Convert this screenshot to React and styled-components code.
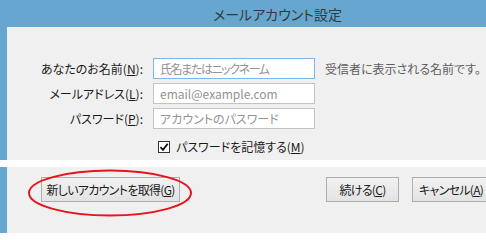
import React from 'react';
import styled, { createGlobalStyle } from 'styled-components';

const GlobalStyle = createGlobalStyle`
  html, body {
    margin: 0;
    padding: 0;
    width: 486px;
    height: 233px;
    overflow: hidden;
    background: #ffffff;
  }
  body {
    font-family: "Noto Sans CJK JP", "Noto Sans", sans-serif;
    font-feature-settings: "palt";
    -webkit-font-smoothing: antialiased;
  }
`;

const Window = styled.div`
  width: 486px;
  height: 233px;
  display: flex;
  flex-direction: column;
  background: #66a6cf;
`;

const TitleBar = styled.div`
  height: 27px;
  display: flex;
  align-items: center;
  padding-left: 213px;
  font-size: 14px;
  color: #2f3b44;
`;

const Frame = styled.div`
  padding-left: 7px;
  height: ${(p) => p.$height}px;
  display: flex;
`;

const Panel = styled.div`
  flex: 1;
  background: #f0f0f0;
  position: relative;
`;

const Divider = styled.div`
  height: 7px;
  background: #ffffff;
`;

const Form = styled.div`
  display: grid;
  grid-template-columns: 136px 162px auto;
  column-gap: 10px;
  row-gap: 4px;
  align-items: center;
  padding-top: 31px;
`;

const Label = styled.label`
  font-size: 12px;
  color: #1a1a1a;
  text-align: right;
  white-space: nowrap;
`;

const Input = styled.div`
  height: 21px;
  box-sizing: border-box;
  background: #ffffff;
  border: 1px solid ${(p) => (p.$focused ? '#7fb6e8' : '#c3c3c3')};
  padding-left: 6px;
  display: flex;
  align-items: center;
  font-size: 12px;
  letter-spacing: ${(p) => (p.$tight ? '-1.4px' : '0')};
  color: #939393;
  white-space: nowrap;
  overflow: hidden;
`;

const Hint = styled.span`
  font-size: 12px;
  color: #5e5e5e;
  white-space: nowrap;
`;

const CheckRow = styled.div`
  display: flex;
  align-items: center;
  gap: 6px;
  margin: 9px 0 0 151px;
  font-size: 12px;
  color: #1a1a1a;
`;

const Box = styled.span`
  width: 12px;
  height: 12px;
  box-sizing: border-box;
  border: 1px solid #333333;
  background: #ffffff;
  display: flex;
  align-items: center;
  justify-content: center;
`;

const ButtonRow = styled.div`
  display: flex;
  align-items: center;
  padding: 10px 0 0 34px;
`;

const Button = styled.div`
  width: ${(p) => p.$width}px;
  margin-left: ${(p) => p.$gap || 0}px;
  flex-shrink: 0;
  height: 25px;
  box-sizing: border-box;
  border: 1px solid #adadad;
  background: linear-gradient(#f2f2f2, #e3e3e3);
  display: flex;
  align-items: center;
  justify-content: center;
  font-size: 12px;
  letter-spacing: -0.7px;
  color: #1a1a1a;
  white-space: nowrap;
`;

const Circle = styled.svg`
  position: absolute;
  left: 20px;
  top: 1px;
  pointer-events: none;
`;

const Check = () => (
  <svg width="10" height="10" viewBox="0 0 10 10">
    <path d="M1.5 5.2 L4 7.8 L8.7 1.8" fill="none" stroke="#111" strokeWidth="1.8" />
  </svg>
);

const App = () => (
  <>
    <GlobalStyle />
    <Window>
      <TitleBar>メールアカウント設定</TitleBar>
      <Frame $height={133}>
        <Panel>
          <Form>
            <Label>
              あなたのお名前(<u>N</u>):
            </Label>
            <Input $focused $tight>
              氏名またはニックネーム
            </Input>
            <Hint>受信者に表示される名前です。</Hint>

            <Label>
              メールアドレス(<u>L</u>):
            </Label>
            <Input>email@example.com</Input>
            <span />

            <Label>
              パスワード(<u>P</u>):
            </Label>
            <Input>アカウントのパスワード</Input>
            <span />
          </Form>
          <CheckRow>
            <Box>
              <Check />
            </Box>
            <span>
              パスワードを記憶する(<u>M</u>)
            </span>
          </CheckRow>
        </Panel>
      </Frame>
      <Divider />
      <Frame $height={66}>
        <Panel>
          <ButtonRow>
            <Button $width={139}>
              新しいアカウントを取得(<u>G</u>)
            </Button>
            <Button $width={73} $gap={146}>
              続ける(<u>C</u>)
            </Button>
            <Button $width={78} $gap={13}>
              キャンセル(<u>A</u>)
            </Button>
          </ButtonRow>
          <Circle width="166" height="50" viewBox="0 0 166 50">
            <ellipse cx="83" cy="25" rx="81" ry="22.5" fill="none" stroke="#e6141b" strokeWidth="2" />
          </Circle>
        </Panel>
      </Frame>
    </Window>
  </>
);

export default App;
